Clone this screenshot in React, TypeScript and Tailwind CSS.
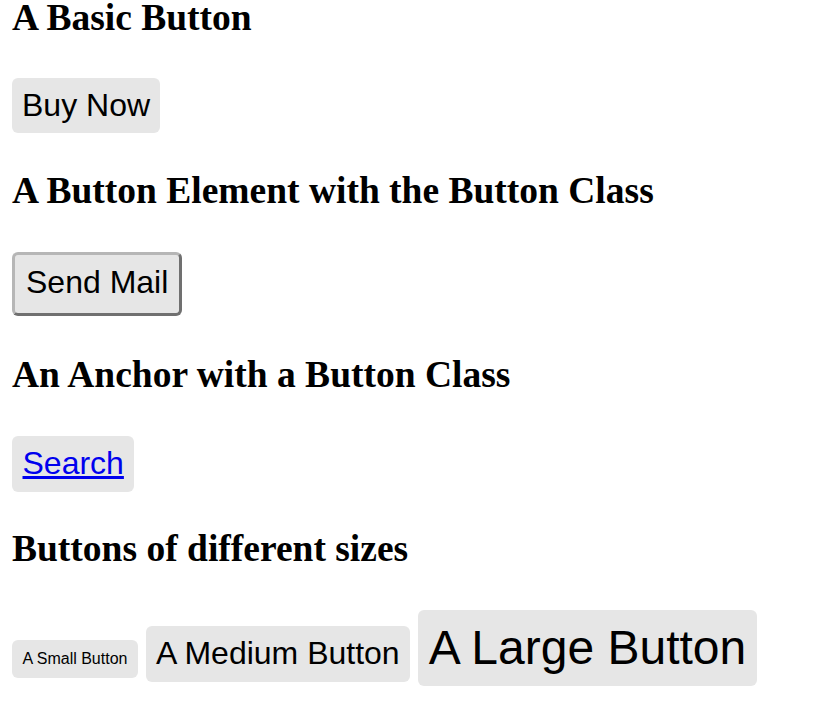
const heading = "font-['Liberation_Serif',serif] font-bold text-[37.5px] leading-[35px] text-black"
const btn = "block w-fit rounded-md bg-[#e6e6e6] text-black"

export default function App() {
  return (
    <div className="min-h-screen bg-white px-3 font-['Liberation_Sans',Arial,sans-serif] text-black">
      <h2 className={heading}>A Basic Button</h2>
      <div className={`${btn} mt-[43px] px-[10px] pt-[9px] pb-[9px] text-[32px] leading-[37px]`}>
        Buy Now
      </div>

      <h2 className={`${heading} mt-[40px]`}>A Button Element with the Button Class</h2>
      <button
        className={`${btn} mt-[44px] border-[3px] border-t-[#b6b6b6] border-l-[#b6b6b6] border-b-[#707070] border-r-[#707070] px-[11px] pt-[9px] pb-[12px] text-[32px] leading-[37px]`}
      >
        Send Mail
      </button>

      <h2 className={`${heading} mt-[41px]`}>An Anchor with a Button Class</h2>
      <a
        href="#"
        className={`${btn} mt-[44px] px-[10.5px] pt-[9px] pb-[10px] text-[32px] leading-[37px] text-[#0000ee]! underline`}
      >
        Search
      </a>

      <h2 className={`${heading} mt-[39px]`}>Buttons of different sizes</h2>
      <div className="mt-[44px] flex items-baseline gap-2">
        <div className={`${btn} px-[10.5px] py-[10px] text-[16px] leading-[18px]`}>A Small Button</div>
        <div className={`${btn} px-[10px] pt-[9px] pb-[10px] text-[32px] leading-[37px]`}>A Medium Button</div>
        <div className={`${btn} px-[11px] pt-[10px] pb-[11px] text-[48px] leading-[55px]`}>A Large Button</div>
      </div>
    </div>
  )
}
